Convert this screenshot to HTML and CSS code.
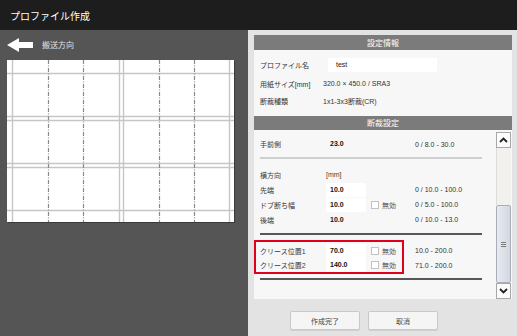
FILE: index.html
```html
<!DOCTYPE html>
<html lang="ja">
<head>
<meta charset="utf-8">
<title>プロファイル作成</title>
<link rel="stylesheet" href="styles.css">
</head>
<body>
<div class="app">
  <header class="topbar"><h1 class="title">プロファイル作成</h1></header>
  <div class="main">
    <section class="left">
      <div class="dir">
        <svg class="arrow" width="26" height="14" viewBox="0 0 26 14"><polygon points="0,7 12,0 12,4 26,4 26,10 12,10 12,14" fill="#fff"/></svg>
        <span class="dir-text">搬送方向</span>
      </div>
      <svg class="preview" width="227" height="162" viewBox="0 0 227 162">
        <rect x="0" y="0" width="227" height="162" fill="#fff"/>
        <g stroke="#c6c6c6" stroke-width="1.4" fill="none">
          <line x1="0" y1="13.5" x2="227" y2="13.5"/>
          <line x1="0" y1="56.5" x2="227" y2="56.5"/>
          <line x1="0" y1="60.5" x2="227" y2="60.5"/>
          <line x1="0" y1="103.5" x2="227" y2="103.5"/>
          <line x1="0" y1="107.5" x2="227" y2="107.5"/>
          <line x1="0" y1="150.5" x2="227" y2="150.5"/>
          <line x1="5.5" y1="0" x2="5.5" y2="162"/>
          <line x1="112.5" y1="0" x2="112.5" y2="162"/>
          <line x1="116.5" y1="0" x2="116.5" y2="162"/>
          <line x1="222.5" y1="0" x2="222.5" y2="162"/>
        </g>
        <g stroke="#8a8a8a" stroke-width="1.2" stroke-dasharray="4 1.5 1 1.5" fill="none">
          <line x1="41.5" y1="0" x2="41.5" y2="162"/>
          <line x1="76.5" y1="0" x2="76.5" y2="162"/>
          <line x1="152.5" y1="0" x2="152.5" y2="162"/>
          <line x1="187.5" y1="0" x2="187.5" y2="162"/>
        </g>
      </svg>
    </section>
    <section class="right">
      <div class="head">設定情報</div>
      <div class="info">
        <div class="irow r1"><span class="ilbl">プロファイル名</span><span class="name-input">test</span></div>
        <div class="irow r2"><span class="ilbl">用紙サイズ[mm]</span><span class="ival">320.0 × 450.0 / SRA3</span></div>
        <div class="irow r3"><span class="ilbl">断裁種類</span><span class="ival">1x1-3x3断裁(CR)</span></div>
      </div>
      <div class="head h2">断裁設定</div>
      <div class="scrollbox">
        <div class="scroll-content">
          <div class="row first"><span class="lbl">手前側</span><span class="val">23.0</span><span class="chk"></span><span class="range">0 / 8.0 - 30.0</span></div>
          <div class="sep light"></div>
          <div class="row"><span class="lbl">横方向</span><span class="unit">[mm]</span><span class="chk"></span><span class="range"></span></div>
          <div class="row"><span class="lbl">先端</span><span class="val box">10.0</span><span class="chk"></span><span class="range">0 / 10.0 - 100.0</span></div>
          <div class="row"><span class="lbl">ドブ断ち幅</span><span class="val box">10.0</span><span class="chk"><span class="cb"></span>無効</span><span class="range">0 / 5.0 - 100.0</span></div>
          <div class="row"><span class="lbl">後端</span><span class="val">10.0</span><span class="chk"></span><span class="range">0 / 10.0 - 13.0</span></div>
          <div class="sep dark"></div>
          <div class="crease">
            <div class="redbox">
              <div class="row c1"><span class="lbl">クリース位置1</span><span class="val box">70.0</span><span class="chk"><span class="cb"></span>無効</span></div>
              <div class="row c2"><span class="lbl">クリース位置2</span><span class="val box">140.0</span><span class="chk"><span class="cb"></span>無効</span></div>
            </div>
            <div class="ranges">
              <div class="row c1"><span class="range">10.0 - 200.0</span></div>
              <div class="row c2"><span class="range">71.0 - 200.0</span></div>
            </div>
          </div>
          <div class="sep dark bottom"></div>
        </div>
        <div class="scrollbar">
          <div class="sb-btn up"><svg width="9" height="6" viewBox="0 0 9 6"><polyline points="1,5 4.5,1.5 8,5" fill="none" stroke="#222" stroke-width="1.8"/></svg></div>
          <div class="sb-track"></div>
          <div class="sb-thumb"><span class="grip"></span></div>
          <div class="sb-btn down"><svg width="9" height="6" viewBox="0 0 9 6"><polyline points="1,1 4.5,4.5 8,1" fill="none" stroke="#222" stroke-width="1.8"/></svg></div>
        </div>
      </div>
      <div class="buttons">
        <button class="btn">作成完了</button>
        <button class="btn">取消</button>
      </div>
    </section>
  </div>
</div>
</body>
</html>
```

FILE: styles.css
```css
* { box-sizing: border-box; }
html, body { margin: 0; padding: 0; }
body {
  width: 517px;
  height: 336px;
  overflow: hidden;
  font-family: "Liberation Sans", "Noto Sans CJK JP", sans-serif;
  background: #555;
}
.app { width: 517px; height: 336px; display: flex; flex-direction: column; }

.topbar {
  height: 30px;
  background: #1d1d1d;
  display: flex;
  align-items: center;
  padding-left: 10px;
  flex: none;
}
.title {
  margin: 0;
  font-size: 10px;
  font-weight: 400;
  color: #fff;
  font-family: "Noto Sans CJK JP", sans-serif;
  letter-spacing: 0;
}

.main { flex: 1; display: flex; min-height: 0; }

.left {
  width: 248px;
  flex: none;
  background: #555;
  padding: 8px 0 0 7px;
}
.dir { display: flex; align-items: center; height: 14px; }
.arrow { display: block; }
.dir-text {
  margin-left: 9px;
  font-size: 8px;
  color: #e2e2e2;
  font-family: "Noto Sans CJK JP", sans-serif;
  position: relative;
  top: -1px;
}
.preview {
  display: block;
  margin-top: 8px;
  box-shadow: 1px 1px 0 #3a3a3a;
}

.right {
  flex: 1;
  background: #e3e3e3;
  padding: 5px 5px 0 6px;
  display: flex;
  flex-direction: column;
}
.head {
  height: 15px;
  line-height: 15px;
  background: #7b7b7b;
  color: #fff;
  text-align: center;
  font-size: 8px;
  font-family: "Noto Sans CJK JP", sans-serif;
}
.head.h2 { height: 14px; line-height: 14px; }

.info {
  height: 66px;
  background: #f7f7f7;
  padding: 8px 0 0 6px;
  font-size: 7px;
  color: #333;
}
.irow { display: flex; align-items: center; }
.irow.r1 { height: 14px; }
.irow.r2 { height: 17px; margin-top: 3px; }
.irow.r3 { height: 17px; }
.ilbl { width: 63px; flex: none; }
.name-input {
  margin-left: 5px;
  width: 109px;
  height: 14px;
  line-height: 14px;
  background: #fff;
  padding-left: 8px;
  color: #222;
}
.ival { color: #333; }

.scrollbox {
  height: 169px;
  display: flex;
  background: #f7f7f7;
  flex: none;
}
.scroll-content {
  flex: 1;
  padding: 7px 0 0 6px;
  font-size: 7px;
  color: #333;
}
.row {
  display: grid;
  grid-template-columns: 66px 40px 49px 1fr;
  align-items: center;
  height: 15px;
}
.row.first { height: 14px; }
.lbl { color: #3a3a3a; }
.val {
  height: 14px;
  line-height: 14px;
  padding-left: 4px;
  color: #111;
  font-weight: bold;
}
.val.box { background: #fff; }
.unit { color: #444; }
.chk {
  display: flex;
  align-items: center;
  padding-left: 5px;
  color: #555;
}
.cb {
  width: 8px;
  height: 8px;
  background: #fff;
  border: 1px solid #c2c2c2;
  margin-right: 3px;
}
.range { color: #333; }

.sep { width: 222px; height: 2px; }
.sep.light { background: #cfcfcf; margin: 6px 0 8px; }
.sep.dark { background: #575757; margin-top: 6px; }
.sep.bottom { margin-top: 4px; }

.crease { display: flex; margin-top: 5px; margin-left: -6px; }
.redbox {
  width: 150px;
  height: 34px;
  border: 2px solid #e0001b;
  padding: 1px 0 0 4px;
}
.redbox .row { grid-template-columns: 66px 40px 1fr; }
.redbox .row.c2, .ranges .row.c2 { height: 14px; }
.ranges { margin-left: 11px; padding-top: 3px; }
.ranges .row { grid-template-columns: auto; }

.scrollbar {
  width: 16px;
  flex: none;
  padding-top: 2px;
  display: flex;
  flex-direction: column;
}
.sb-btn {
  width: 15px;
  height: 16px;
  background: #fbfbfb;
  border: 1px solid #a8a8a8;
  display: flex;
  align-items: center;
  justify-content: center;
}
.sb-track {
  width: 15px;
  height: 57px;
  background: #f3f1ee;
  border-left: 1px solid #dcdcdc;
}
.sb-thumb {
  width: 15px;
  height: 78px;
  background: linear-gradient(to right, #e8eaf0, #d3d7e0);
  border: 1px solid #a9aeb9;
  border-radius: 2px;
  display: flex;
  align-items: center;
  justify-content: center;
}
.grip {
  width: 5px;
  height: 5px;
  background: repeating-linear-gradient(to bottom, #7a7a7a 0 1px, transparent 1px 2px);
}

.buttons {
  display: flex;
  gap: 8px;
  padding-left: 36px;
  margin-top: 12px;
}
.btn {
  width: 70px;
  height: 19px;
  margin: 0;
  padding: 0;
  background: #f5f5f5;
  border: 1px solid #c9c9c9;
  border-radius: 2px;
  font-family: "Noto Sans CJK JP", sans-serif;
  font-size: 7px;
  color: #444;
  box-shadow: 0 1px 0 #d0d0d0;
}
```
